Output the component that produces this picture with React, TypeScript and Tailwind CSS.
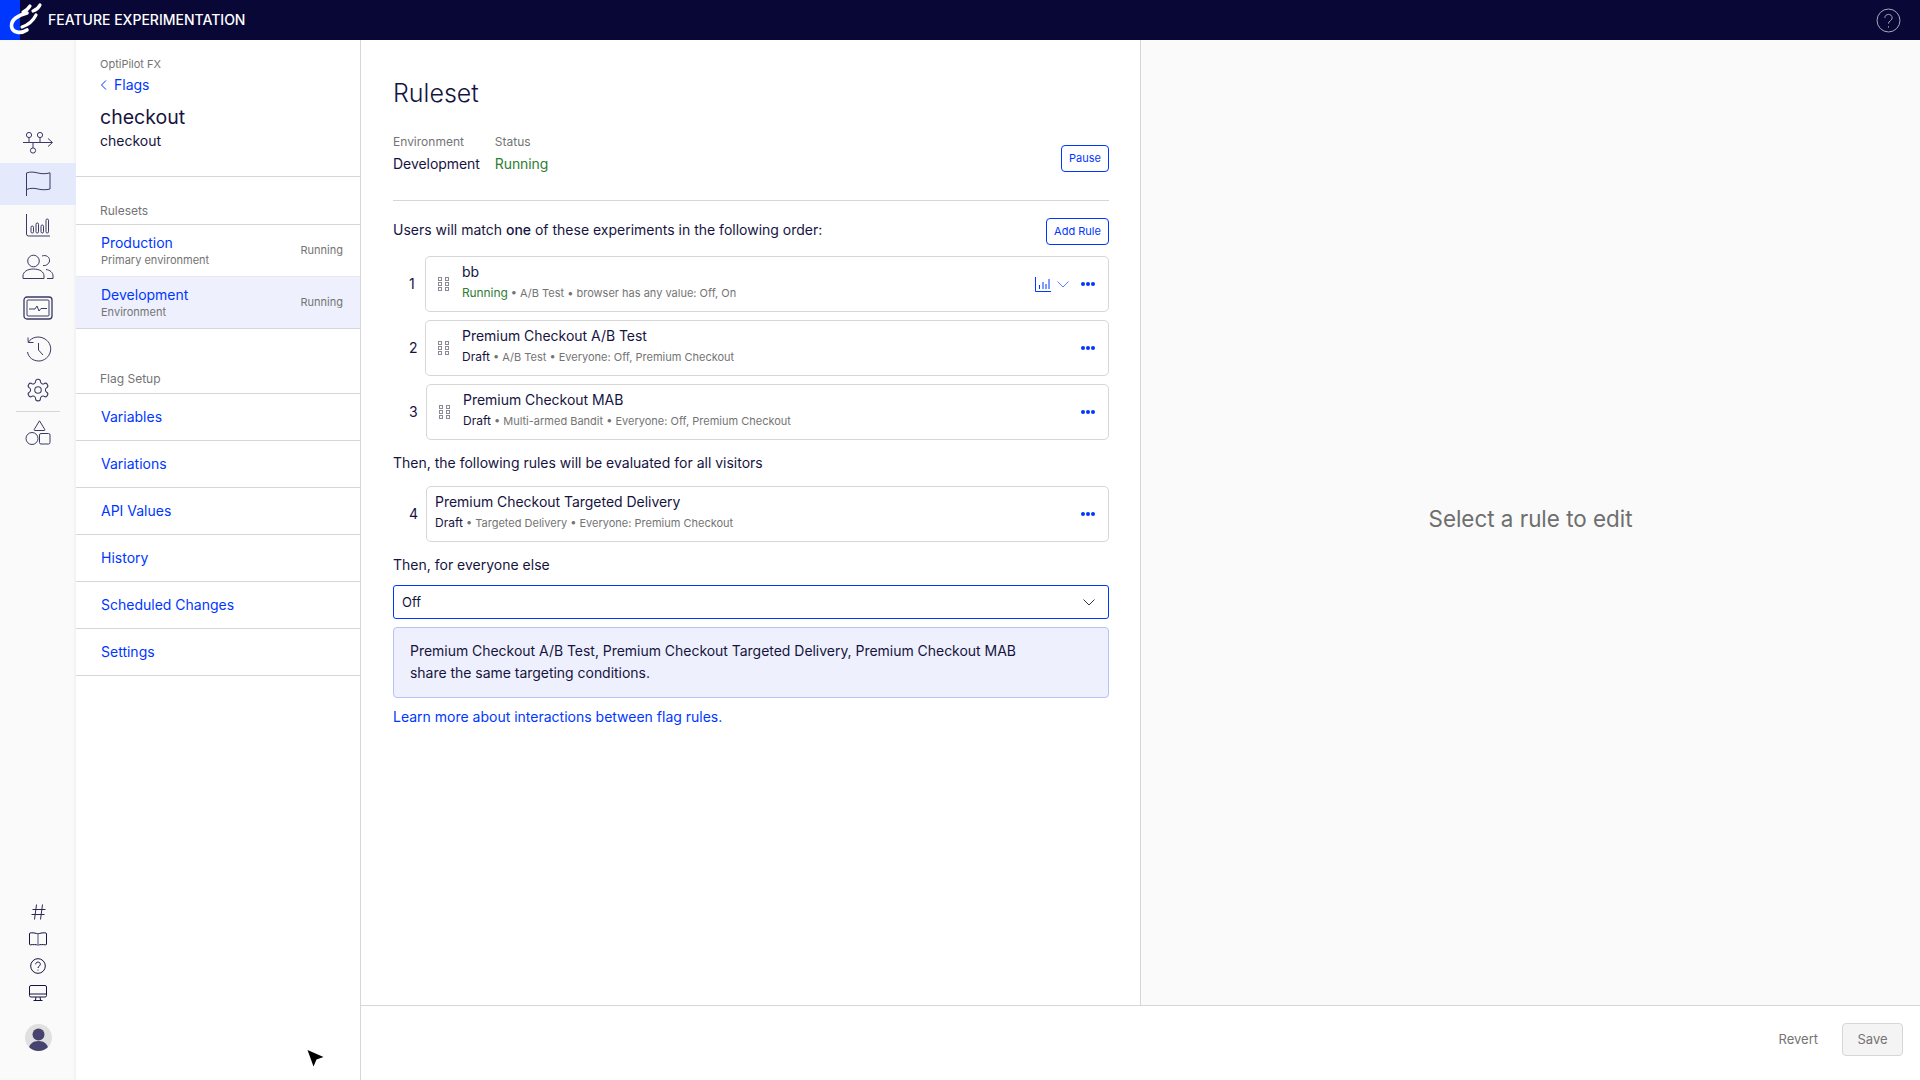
import type { ReactNode } from "react";

const stroke = "#3b3963";

function Logo() {
  return (
    <svg width="44" height="40" viewBox="0 0 44 40" fill="none" stroke="white" strokeLinecap="round" className="absolute left-0 top-0">
      <path d="M27 13 C 18 15 11 20 11.500 26 C 12 33 21 34 27 30" strokeWidth="3.600" />
      <path d="M22 27 C 28 25 33 21 36 15" strokeWidth="3.200" />
      <path d="M23 12 C 26 11 28 9 30 6" strokeWidth="3.200" />
      <path d="M33 11 C 36 10 38.500 8 40 5" strokeWidth="3.200" />
    </svg>
  );
}

function FlowIcon() {
  return (
    <svg width="32" height="26" viewBox="0 0 32 26" fill="none" stroke={stroke} strokeWidth="1">
      <path d="M1 12.500 H30 M26 8.500 L30.500 12.500 L26 16.500" />
      <circle cx="7" cy="5" r="2.600" />
      <circle cx="18" cy="5" r="2.600" />
      <circle cx="11" cy="20.500" r="2.600" />
      <path d="M7 7.600 V12.500 M18 7.600 V12.500 M11 12.500 V18" />
    </svg>
  );
}

function FlagIcon() {
  return (
    <svg width="26" height="26" viewBox="0 0 26 26" fill="none" stroke={stroke} strokeWidth="1">
      <path d="M1.500 25 V2 C 5 0.500 9 1 13 2 C 17 3 21 3 25 1.800 V18 C 21 19 17 19 13 18 C 9 17 5 17 1.500 18.500" />
    </svg>
  );
}

function ChartIcon() {
  return (
    <svg width="26" height="24" viewBox="0 0 26 24" fill="none" stroke={stroke} strokeWidth="1">
      <path d="M1.500 1 V21 Q1.500 23 3.500 23 H25" />
      <rect x="6" y="13" width="2.500" height="7" rx="1.250" />
      <rect x="11" y="10" width="2.500" height="10" rx="1.250" />
      <rect x="16" y="12" width="2.500" height="8" rx="1.250" />
      <rect x="21" y="6" width="2.500" height="14" rx="1.250" />
    </svg>
  );
}

function PeopleIcon() {
  return (
    <svg width="32" height="26" viewBox="0 0 32 26" fill="none" stroke={stroke} strokeWidth="1">
      <circle cx="11.500" cy="7" r="5.800" />
      <path d="M1 24.500 V22 C 1 18 5 15 11.500 15 C 18 15 22 18 22 22 V24.500 Z" />
      <path d="M20 2 C 24 0.500 28 3 27.500 7 C 27 10 24 12 21 11.500" />
      <path d="M24 15.500 C 28 16 31 18.500 31 22 V24.500 H25" />
    </svg>
  );
}

function MonitorIcon() {
  return (
    <svg width="30" height="24" viewBox="0 0 30 24" fill="none" stroke={stroke} strokeWidth="1">
      <rect x="1" y="1" width="28" height="22" rx="3" strokeWidth="1.300" />
      <rect x="4" y="4" width="22" height="16" rx="1" />
      <path d="M6 13 H12 L14 10 L16 15 L18 12.500 H24" />
    </svg>
  );
}

function HistoryIcon() {
  return (
    <svg width="27" height="26" viewBox="0 0 27 26" fill="none" stroke={stroke} strokeWidth="1">
      <path d="M3.500 6 C 7 1 13 0 18 2 C 24 4.500 26.500 10 25.500 15 C 24.500 21 19 25 14 25 C 8 25 3.500 21.500 2.500 16" />
      <path d="M3 1.500 L3.200 6.500 L8.500 6.500" />
      <path d="M13.500 7 V14 L18 19" />
    </svg>
  );
}

function GearIcon() {
  return (
    <svg width="26" height="26" viewBox="0 0 24 24" fill="none" stroke={stroke} strokeWidth="1">
      <path d="M12.220 2h-.44a2 2 0 0 0-2 2v.18a2 2 0 0 1-1 1.730l-.43.250a2 2 0 0 1-2 0l-.150-.080a2 2 0 0 0-2.730.730l-.220.380a2 2 0 0 0 .730 2.730l.150.100a2 2 0 0 1 1 1.720v.510a2 2 0 0 1-1 1.740l-.150.090a2 2 0 0 0-.730 2.730l.220.380a2 2 0 0 0 2.730.730l.150-.080a2 2 0 0 1 2 0l.430.250a2 2 0 0 1 1 1.730V20a2 2 0 0 0 2 2h.440a2 2 0 0 0 2-2v-.18a2 2 0 0 1 1-1.730l.430-.250a2 2 0 0 1 2 0l.150.080a2 2 0 0 0 2.730-.730l.220-.390a2 2 0 0 0-.730-2.730l-.150-.080a2 2 0 0 1-1-1.740v-.500a2 2 0 0 1 1-1.740l.150-.090a2 2 0 0 0 .730-2.730l-.220-.380a2 2 0 0 0-2.730-.730l-.150.080a2 2 0 0 1-2 0l-.430-.250a2 2 0 0 1-1-1.730V4a2 2 0 0 0-2-2z" />
      <circle cx="12" cy="12" r="3" />
    </svg>
  );
}

function ShapesIcon() {
  return (
    <svg width="26" height="25" viewBox="0 0 26 25" fill="none" stroke={stroke} strokeWidth="1">
      <path d="M14.500 0.800 L19.800 9.500 Q20.200 10.500 19.200 10.500 H9.800 Q8.800 10.500 9.200 9.500 Z" />
      <circle cx="7" cy="18.500" r="6" />
      <rect x="14.500" y="13.500" width="10.500" height="10.500" rx="1.500" />
    </svg>
  );
}

function HashIcon() {
  return (
    <svg width="15" height="16" viewBox="0 0 15 16" fill="none" stroke="#2b2958" strokeWidth="1">
      <path d="M5.500 0.500 L3.500 15.500 M11.500 0.500 L9.500 15.500 M1.500 5.500 H14.500 M0.500 10.500 H13.500" />
    </svg>
  );
}

function BookIcon() {
  return (
    <svg width="18" height="14" viewBox="0 0 18 14" fill="none" stroke="#16143f" strokeWidth="1">
      <path d="M9 2 C 7 1 3 0.500 1 1 Q0.500 1 0.500 2 V12 Q0.500 13 1.500 12.800 C 4 12.500 7 12.500 9 13 C 11 12.500 14 12.500 16.500 12.800 Q17.500 13 17.500 12 V2 Q17.500 1 17 1 C 15 0.500 11 1 9 2 Z" />
      <path d="M9 2 V13" stroke="#8d8ca6" strokeWidth="1.500" />
    </svg>
  );
}

function HelpIcon({ size, color }: { size: number; color: string }) {
  return (
    <svg width={size} height={size} viewBox="0 0 24 24" fill="none" stroke={color} strokeWidth={24 / size}>
      <circle cx="12" cy="12" r="11" />
      <path d="M8.500 9.500 C 8.500 5 15.500 5 15.500 9.500 C 15.500 12.500 12 12 12 15" />
      <path d="M12 17.500 V18.800" />
    </svg>
  );
}

function DesktopIcon() {
  return (
    <svg width="18" height="16" viewBox="0 0 18 16" fill="none" stroke="#16143f" strokeWidth="1">
      <rect x="0.500" y="0.500" width="17" height="11.500" rx="1.500" />
      <path d="M0.500 9 H17.500 M7 12 L6.500 15 M11 12 L11.500 15 M4.500 15.500 H13.500" />
    </svg>
  );
}

function Avatar() {
  return (
    <div className="w-[27px] h-[27px] rounded-full bg-[#e0e0e0] overflow-hidden">
      <svg width="27" height="27" viewBox="0 0 27 27" fill="#46446e">
        <circle cx="13.500" cy="10.500" r="6" />
        <path d="M3.500 27 C 3.500 20 8 17 13.500 17 C 19 17 23.500 20 23.500 27 Z" />
      </svg>
    </div>
  );
}

function Grip() {
  return (
    <svg width="11" height="14" viewBox="0 0 11 14" fill="none" stroke="#8a8a99" strokeWidth="1">
      <rect x="0.500" y="0.500" width="3" height="3" />
      <rect x="7.500" y="0.500" width="3" height="3" />
      <rect x="0.500" y="5.500" width="3" height="3" />
      <rect x="7.500" y="5.500" width="3" height="3" />
      <rect x="0.500" y="10.500" width="3" height="3" />
      <rect x="7.500" y="10.500" width="3" height="3" />
    </svg>
  );
}

function Dots() {
  return (
    <svg width="14" height="4" viewBox="0 0 14 4" fill="#0037ff">
      <circle cx="2" cy="2" r="2" />
      <circle cx="7" cy="2" r="2" />
      <circle cx="12" cy="2" r="2" />
    </svg>
  );
}

function Chevron({ color }: { color: string }) {
  return (
    <svg width="12" height="7" viewBox="0 0 12 7" fill="none" stroke={color} strokeWidth="1">
      <path d="M0.500 0.500 L6 6 L11.500 0.500" />
    </svg>
  );
}

const railIcons: { icon: ReactNode; active?: boolean }[] = [
  { icon: <FlowIcon /> },
  { icon: <FlagIcon />, active: true },
  { icon: <ChartIcon /> },
  { icon: <PeopleIcon /> },
  { icon: <MonitorIcon /> },
  { icon: <HistoryIcon /> },
  { icon: <GearIcon /> },
];

const setupLinks = ["Variables", "Variations", "API Values", "History", "Scheduled Changes", "Settings"];

const rules = [
  { n: 1, name: "bb", status: "Running", detail: "A/B Test • browser has any value: Off, On", offset: "ml-0", grip: true, chart: true },
  { n: 2, name: "Premium Checkout A/B Test", status: "Draft", detail: "A/B Test • Everyone: Off, Premium Checkout", offset: "ml-0", grip: true, chart: false },
  { n: 3, name: "Premium Checkout MAB", status: "Draft", detail: "Multi-armed Bandit • Everyone: Off, Premium Checkout", offset: "ml-[1px]", grip: true, chart: false },
];

type Rule = (typeof rules)[number];

function RuleRow({ rule }: { rule: Rule }) {
  return (
    <div className="flex items-center h-[56px]">
      <div className="w-[32px] pl-[16px] text-sm text-[#16143f]">{rule.n}</div>
      <div className={`${rule.offset} flex-1 h-full flex items-center border border-[#d6d6d6] rounded-[5px] pr-[13px] pl-[12px]`}>
        {rule.grip && (
          <div className="w-[24px] shrink-0">
            <Grip />
          </div>
        )}
        <div className="flex-1 min-w-0 pb-[5px]">
          <div className="text-sm leading-[20px] tracking-[-0.03px] text-[#16143f]">{rule.name}</div>
          <div className="mt-[2px] text-[11px] leading-[18px] text-[#747474] whitespace-nowrap">
            <span className={rule.status === "Running" ? "text-xs tracking-[-0.1px] text-[#2e7d32]" : "text-xs text-[#16143f]"}>{rule.status}</span> • {rule.detail}
          </div>
        </div>
        {rule.chart && (
          <div className="flex items-center gap-[6px] mr-[12px]">
            <svg width="16" height="15" viewBox="0 0 16 15" fill="none" stroke="#0037ff" strokeWidth="1">
              <path d="M0.500 0 V14.500 H16 M4.500 8 V12 M8 5 V12 M11 7 V12 M14 2 V12" />
            </svg>
            <Chevron color="#5c80ff" />
          </div>
        )}
        <Dots />
      </div>
    </div>
  );
}

export default function App() {
  return (
    <div className="w-[1920px] h-[1080px] flex flex-col overflow-hidden bg-white font-['Inter',sans-serif] text-[#16143f]">
      <header className="relative h-[40px] shrink-0 bg-[#080736] flex items-center">
        <div className="w-[20px] h-full bg-[#0037ff]" />
        <Logo />
        <span className="ml-[28px] text-sm font-medium text-white">FEATURE EXPERIMENTATION</span>
        <div className="ml-auto mr-[19px]">
          <HelpIcon size={25} color="#a9a9bc" />
        </div>
      </header>

      <div className="flex-1 flex min-h-0">
        {/* icon rail */}
        <nav className="w-[76px] shrink-0 bg-[#fafafa] shadow-[inset_-2px_0_2px_rgba(0,0,0,0.03)] flex flex-col items-stretch pt-[82px] pb-[29px]">
          {railIcons.map((item, i) => (
            <div key={i} className={item.active ? "h-[41.300px] flex items-center justify-center bg-[#e5e9fc]" : "h-[41.300px] flex items-center justify-center"}>
              {item.icon}
            </div>
          ))}
          <div className="mx-[16px] h-px bg-[#d6d6d6]" />
          <div className="h-[40px] flex items-center justify-center">
            <ShapesIcon />
          </div>
          <div className="mt-auto flex flex-col items-center">
            <div className="h-[27px] flex items-center justify-center">
              <HashIcon />
            </div>
            <div className="h-[27px] flex items-center justify-center">
              <BookIcon />
            </div>
            <div className="h-[27px] flex items-center justify-center">
              <HelpIcon size={16} color="#16143f" />
            </div>
            <div className="h-[27px] flex items-center justify-center">
              <DesktopIcon />
            </div>
            <div className="mt-[18px]">
              <Avatar />
            </div>
          </div>
        </nav>

        {/* flag sidebar */}
        <aside className="relative w-[285px] shrink-0 border-r border-[#d6d6d6]">
          <div className="h-[137px] border-b border-[#d6d6d6] pl-[24px] pr-[20px] pt-[17px]">
            <div className="text-[11px] leading-[14px] text-[#747474]">OptiPilot FX</div>
            <div className="mt-[4px] flex items-center gap-[6px] text-sm leading-[20px] text-[#0037ff]">
              <svg width="7" height="10" viewBox="0 0 7 10" fill="none" stroke="#0037ff" strokeWidth="1">
                <path d="M6 0.500 L1.500 5 L6 9.500" />
              </svg>
              <span className="ml-[1px]">Flags</span>
            </div>
            <div className="mt-[9px] text-[19.500px] leading-[26px]">checkout</div>
            <div className="mt-[1px] text-sm leading-[20px]">checkout</div>
          </div>

          <div className="h-[48px] border-b border-[#d6d6d6] pl-[24px] pt-[26px] text-xs leading-[16px] text-[#747474]">Rulesets</div>
          <div className="h-[52px] border-b border-[#e8e8e8] pl-[25px] pr-[17px] flex items-center justify-between">
            <div>
              <div className="text-sm leading-[18px] text-[#0037ff]">Production</div>
              <div className="text-[11px] leading-[16px] text-[#747474]">Primary environment</div>
            </div>
            <span className="text-[11px] text-[#747474]">Running</span>
          </div>
          <div className="h-[52px] border-b border-[#d6d6d6] bg-[#eef1fd] pl-[25px] pr-[17px] flex items-center justify-between">
            <div>
              <div className="text-sm leading-[18px] text-[#0037ff]">Development</div>
              <div className="text-[11px] leading-[16px] text-[#747474]">Environment</div>
            </div>
            <span className="text-[11px] text-[#747474]">Running</span>
          </div>

          <div className="h-[65px] border-b border-[#d6d6d6] pl-[24px] pt-[42px] text-xs leading-[16px] text-[#747474]">Flag Setup</div>
          {setupLinks.map((label) => (
            <div key={label} className="h-[47px] border-b border-[#d6d6d6] pl-[25px] flex items-center text-sm text-[#0037ff]">
              {label}
            </div>
          ))}

          {/* recorded mouse pointer */}
          <svg width="18" height="18" viewBox="0 0 18 18" fill="#000" className="absolute left-[231px] top-[1010px]">
            <path d="M0.500 0 L16.500 7 L9.500 9.500 L6.500 16.500 Z" />
          </svg>
        </aside>

        <div className="flex-1 flex flex-col min-w-0">
          <div className="flex-1 flex min-h-0">
            {/* ruleset */}
            <main className="w-[780px] shrink-0 border-r border-[#d6d6d6] pl-[32px] pr-[31px] pt-[32px]">
              <h1 className="text-[25px] leading-[42px] font-light">Ruleset</h1>
              <div className="mt-[14px] flex items-center justify-between h-[50px]">
                <div className="flex gap-[15px]">
                  <div>
                    <div className="text-xs leading-[18px] text-[#747474]">Environment</div>
                    <div className="mt-[3px] text-sm leading-[20px] tracking-[-0.05px]">Development</div>
                  </div>
                  <div>
                    <div className="text-xs leading-[18px] text-[#747474]">Status</div>
                    <div className="mt-[3px] text-sm leading-[20px] tracking-[-0.1px] text-[#2e7d32]">Running</div>
                  </div>
                </div>
                <button className="h-[27px] w-[48px] mt-[11px] rounded-[4px] border border-[#0037ff] text-[11px] text-[#0037ff]">Pause</button>
              </div>
              <div className="mt-[22px] h-px bg-[#d6d6d6]" />

              <div className="mt-[16px] flex items-center justify-between h-[28px]">
                <p className="text-sm mb-[3px]">
                  Users will match <span className="font-medium">one</span> of these experiments in the following order:
                </p>
                <button className="h-[27px] w-[63px] rounded-[4px] border border-[#0037ff] text-[11px] text-[#0037ff]">Add Rule</button>
              </div>

              <div className="mt-[11px] flex flex-col gap-[8px]">
                {rules.map((rule) => (
                  <RuleRow key={rule.n} rule={rule} />
                ))}
              </div>

              <p className="mt-[13px] text-sm leading-[20px]">Then, the following rules will be evaluated for all visitors</p>

              <div className="mt-[13px]">
                <div className="flex items-center h-[56px]">
                  <div className="w-[32px] pl-[16px] text-sm">4</div>
                  <div className="ml-[1px] flex-1 h-full flex items-center border border-[#d6d6d6] rounded-[5px] pl-[8px] pr-[13px]">
                    <div className="flex-1 min-w-0 pb-[5px]">
                      <div className="text-sm leading-[20px] tracking-[-0.03px]">Premium Checkout Targeted Delivery</div>
                      <div className="mt-[2px] text-[11px] leading-[18px] text-[#747474]">
                        <span className="text-xs text-[#16143f]">Draft</span> • Targeted Delivery • Everyone: Premium Checkout
                      </div>
                    </div>
                    <Dots />
                  </div>
                </div>
              </div>

              <p className="mt-[13px] text-sm leading-[20px]">Then, for everyone else</p>

              <div className="mt-[10px] h-[34px] border border-[#0037ff] rounded-[3px] flex items-center justify-between pl-[8px] pr-[13px] text-[13px]">
                <span className="pt-[1px]">Off</span>
                <Chevron color="#33334d" />
              </div>

              <div className="mt-[8px] h-[71px] border border-[#b4c3f8] rounded-[4px] bg-[#eef1fd] px-[16px] pt-[12px] text-sm leading-[22px] tracking-[-0.03px]">
                Premium Checkout A/B Test, Premium Checkout Targeted Delivery, Premium Checkout MAB
                <br />
                share the same targeting conditions.
              </div>

              <p className="mt-[9px] text-sm leading-[20px] text-[#0037ff]">Learn more about interactions between flag rules.</p>
            </main>

            {/* editor placeholder */}
            <section className="flex-1 bg-[#fafafa] flex items-center justify-center pb-[8px]">
              <span className="text-[22.400px] text-[#6e6e6e]">Select a rule to edit</span>
            </section>
          </div>

          <footer className="h-[75px] shrink-0 border-t border-[#d6d6d6] flex items-center justify-end gap-[24px] pr-[17px] pb-[7px]">
            <span className="text-[13px] text-[#747474]">Revert</span>
            <button className="w-[61px] h-[33px] rounded-[4px] border border-[#d6d6d6] bg-[#f4f4f4] text-[13px] text-[#747474]">Save</button>
          </footer>
        </div>
      </div>
    </div>
  );
}
